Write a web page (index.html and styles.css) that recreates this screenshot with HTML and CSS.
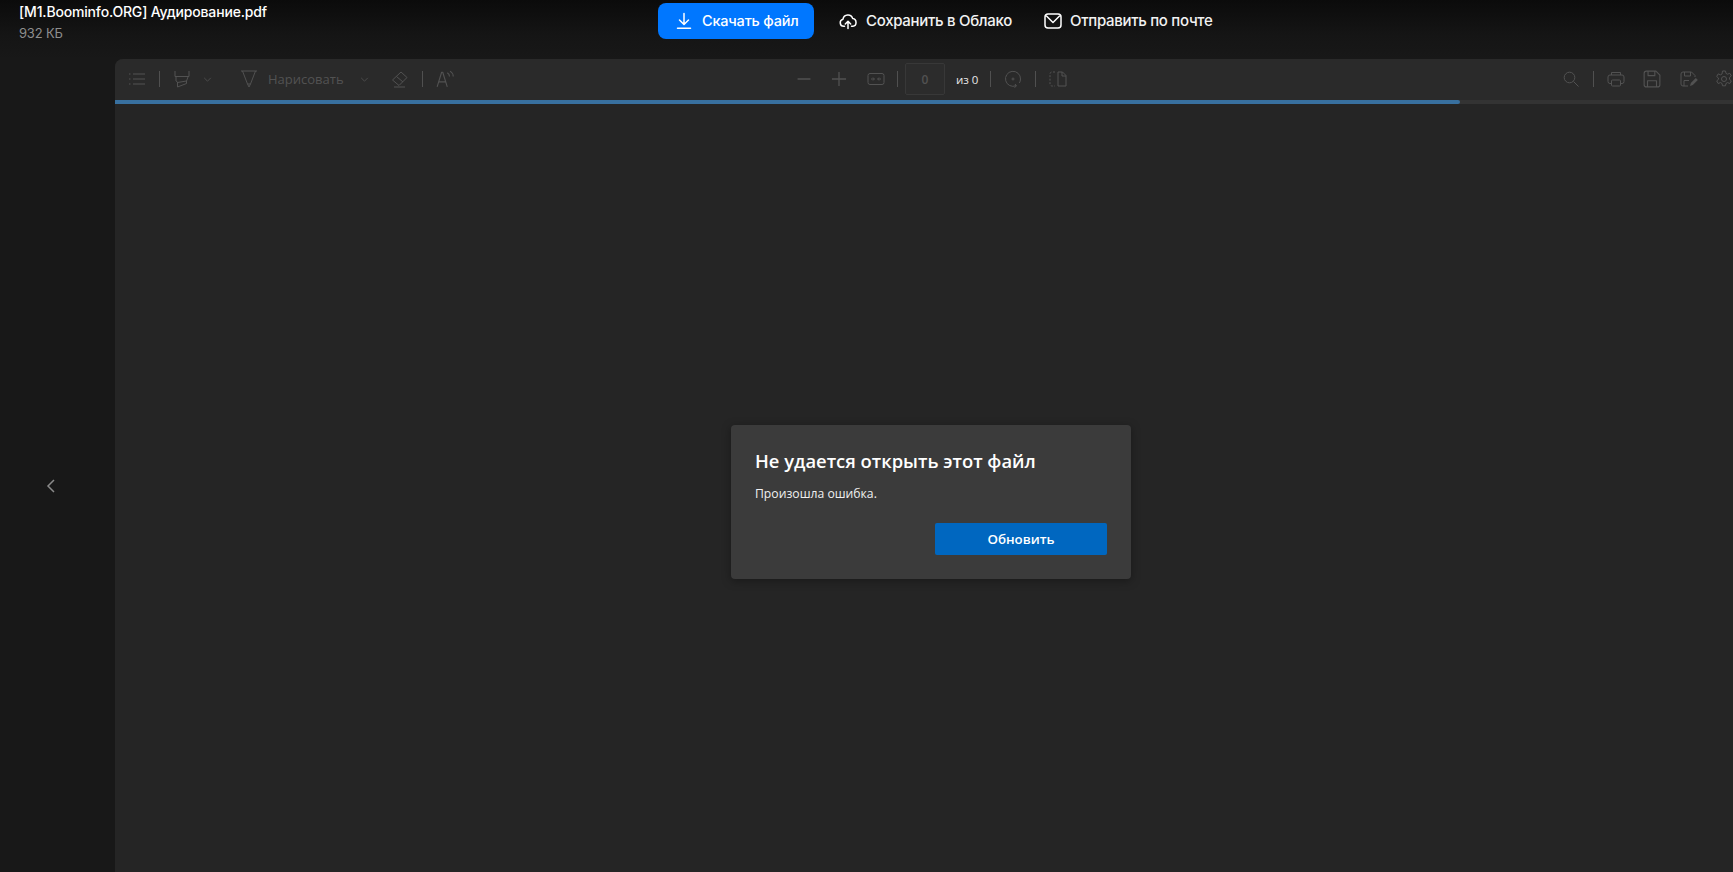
FILE: index.html
```html
<!DOCTYPE html>
<html lang="ru">
<head>
<meta charset="utf-8">
<title>Просмотр файла</title>
<link rel="stylesheet" href="styles.css">
</head>
<body>
<header class="top">
  <div class="file">
    <div class="file-name">[M1.Boominfo.ORG] Аудирование.pdf</div>
    <div class="file-size">932 КБ</div>
  </div>
  <div class="actions">
    <button class="primary">
      <svg class="ai" viewBox="0 0 18 18"><path d="M9 1.500v10.500M4.500 8 9 12.500 13.500 8M2.500 16.200h13"/></svg>
      Скачать файл
    </button>
    <a class="action save">
      <svg class="ai" viewBox="0 0 18 18"><path d="M5.500 14.300H4.800A3.600 3.600 0 0 1 4 7.200a5 5 0 0 1 9.700-.6 3.900 3.900 0 0 1 .1 7.700h-1.300M9 16.500V9.500M6.300 12 9 9.300 11.700 12"/></svg>
      Сохранить в Облако
    </a>
    <a class="action mail">
      <svg class="ai" viewBox="0 0 18 18"><rect x="1" y="2" width="16" height="14" rx="3"/><path d="M2.500 4 9 10.500 15.500 4"/></svg>
      Отправить по почте
    </a>
  </div>
</header>
<main class="main">
  <nav class="gutter">
    <svg class="chev" viewBox="0 0 10 16"><path d="M8 2 2 8l6 6"/></svg>
  </nav>
  <section class="viewer">
    <div class="toolbar">
      <span class="tb"><svg viewBox="0 0 18 14"><path d="M5 2h12M5 7h12M5 12h12M1 2h1.500M1 7h1.500M1 12h1.500"/></svg></span>
      <i class="sep"></i>
      <span class="tb"><svg viewBox="0 0 16 18"><path d="M1 1v5.500h14V1M2 7v4l1.500 1v5l9-3.500V11L14 7M3.500 12.500 12.500 11"/></svg></span>
      <span class="tb-s"><svg viewBox="0 0 10 6"><path d="M1 1l4 4 4-4"/></svg></span>
      <span class="tb draw"><svg viewBox="0 0 18 18"><path d="M1 1h16M2.500 1 7.500 14h3L15.500 1M7.500 14 9 17l1.500-3"/></svg></span>
      <span class="draw-label">Нарисовать</span>
      <span class="tb-s draw-chev"><svg viewBox="0 0 10 6"><path d="M1 1l4 4 4-4"/></svg></span>
      <span class="tb eraser"><svg viewBox="0 0 18 18"><path d="M1.500 10 10 2l6 5.500-8 8zM5.500 6.500 12 12M3 17h11"/></svg></span>
      <i class="sep"></i>
      <span class="tb"><svg viewBox="0 0 16 16"><path d="M1 15 5 2h1l4 13M2.500 10.500h6M10 2.500c1.500.8 2 1.800 2 3.300M12.500 1c2 1.200 2.800 2.800 2.800 4.800"/></svg></span>

      <span class="tb minus"><svg viewBox="0 0 14 14"><path d="M2 7h10"/></svg></span>
      <span class="tb plus"><svg viewBox="0 0 14 14"><path d="M1.500 7h11M7 1.500v11"/></svg></span>
      <span class="tb fit"><svg viewBox="0 0 18 14"><rect x="1" y="1.500" width="16" height="11" rx="2"/><path d="M4 7h3M11 7h3M6 5.500 7.500 7 6 8.500M12 5.500 10.500 7 12 8.500"/></svg></span>
      <i class="sep sep-fit"></i>
      <span class="page-input">0</span>
      <span class="page-total">из 0</span>
      <i class="sep sep-total"></i>
      <span class="tb"><svg viewBox="0 0 18 18"><path d="M12 15.700A7.500 7.500 0 1 1 16.500 9c0 1.500-.4 2.800-1.100 4M11 14l1.500 2-2 1.500"/><circle cx="9" cy="9" r="1"/></svg></span>
      <i class="sep"></i>
      <span class="tb"><svg viewBox="0 0 18 16"><path d="M9 1h4.500L17 4.500V15H9zM13 1v4h4"/><path class="dash" d="M6 1H3a2 2 0 0 0-2 2v10a2 2 0 0 0 2 2h3"/></svg></span>

      <span class="tb search"><svg viewBox="0 0 16 16"><circle cx="6.500" cy="6.500" r="5.300"/><path d="m10.500 10.500 5 5"/></svg></span>
      <i class="sep"></i>
      <span class="tb print"><svg viewBox="0 0 18 16"><path d="M4.500 4V1.500h9V4M4.500 12.500H3A2 2 0 0 1 1 10.500V6a2 2 0 0 1 2-2h12a2 2 0 0 1 2 2v4.500a2 2 0 0 1-2 2h-1.500"/><rect x="4.500" y="9" width="9" height="6" rx="1"/></svg></span>
      <span class="tb disk"><svg viewBox="0 0 16 16"><path d="M1 3a2 2 0 0 1 2-2h8.500L15 4.500V13a2 2 0 0 1-2 2H3a2 2 0 0 1-2-2zM4.500 1v4h6V1M4 15V9.500h8V15"/></svg></span>
      <span class="tb disk-edit"><svg viewBox="0 0 18 16"><path d="M8 15H3a2 2 0 0 1-2-2V3a2 2 0 0 1 2-2h8.500L15 4.500V6M4.500 1v4h6V1M4 15V9.500h5"/><path class="fill" d="m10 15 .8-3 5-5 2 2-5 5z"/></svg></span>
      <span class="tb gear"><svg viewBox="0 0 18 18"><circle cx="9" cy="9" r="2.500"/><path d="M7.500 1h3l.5 2.400 1.500.8 2.300-.9 1.500 2.600-1.800 1.600v1.800l1.800 1.600-1.500 2.600-2.300-.9-1.500.8-.5 2.400h-3L7 13.400l-1.500-.8-2.300.9-1.500-2.600 1.800-1.600V8.100L1.700 6.500l1.500-2.600 2.300.9L7 4z"/></svg></span>
    </div>
    <div class="progress"><div class="progress-bar"></div></div>
    <div class="canvas">
      <div class="dialog">
        <h2 class="dialog-title">Не удается открыть этот файл</h2>
        <p class="dialog-text">Произошла ошибка.</p>
        <div class="dialog-actions"><button class="refresh">Обновить</button></div>
      </div>
    </div>
  </section>
</main>
</body>
</html>
```
FILE: styles.css
```css
* { box-sizing: border-box; }
html, body { height: 100%; margin: 0; }
body {
  display: flex;
  flex-direction: column;
  overflow: hidden;
  background: #181818;
  font-family: Inter, "Noto Sans", sans-serif;
  color: #fff;
}
.top {
  position: relative;
  height: 59px;
  flex: none;
  display: flex;
  background: linear-gradient(#0b0b0b, #151515 60%, #181818);
}
.file { padding: 3px 0 0 19px; width: 658px; flex: none; }
.file-name { font-size: 14px; line-height: 18px; font-weight: 500; letter-spacing: -0.17px; white-space: nowrap; }
.file-size { margin-top: 3px; font-size: 13px; line-height: 18px; color: #8e8e8e; letter-spacing: -0.2px; }
.actions { display: flex; align-items: flex-start; }
.primary {
  display: flex;
  align-items: center;
  gap: 9px;
  width: 156px;
  height: 36px;
  margin-top: 3px;
  padding: 0 0 1px 17px;
  border: 0;
  border-radius: 8px;
  background: #0077ff;
  color: #fff;
  font: 500 14.500px Inter, sans-serif;
  letter-spacing: -0.2px;
  white-space: nowrap;
}
.action {
  display: flex;
  align-items: center;
  gap: 9px;
  height: 36px;
  margin-top: 3px;
  padding-bottom: 1px;
  font-size: 15px;
  font-weight: 500;
  letter-spacing: -0.3px;
  color: #f2f2f2;
  white-space: nowrap;
}
.save { margin-left: 25px; }
.mail { margin-left: 32px; gap: 8px; }
.ai { width: 18px; height: 18px; flex: none; fill: none; stroke: #fff; stroke-width: 1.500; stroke-linecap: round; stroke-linejoin: round; }
.main { flex: 1; min-height: 0; display: flex; }
.gutter { width: 115px; flex: none; display: flex; align-items: center; justify-content: center; padding: 40px 14px 0 0; }
.chev { width: 10px; height: 16px; fill: none; stroke: #8a8a8a; stroke-width: 1.500; }
.viewer {
  width: 1632px;
  flex: none;
  display: flex;
  flex-direction: column;
  background: #252525;
  border-radius: 8px 0 0 0;
  overflow: hidden;
}
.toolbar {
  height: 41px;
  flex: none;
  display: flex;
  align-items: center;
  padding: 0 6px 1px 5px;
  background: #2a2a2a;
  color: #525252;
}
.tb { width: 34px; height: 40px; flex: none; display: flex; align-items: center; justify-content: center; }
.tb svg { width: 18px; height: 18px; fill: none; stroke: #525252; stroke-width: 1; stroke-linejoin: round; }
.tb-s { width: 16px; flex: none; display: flex; justify-content: center; }
.tb-s svg { width: 9px; height: 5px; fill: none; stroke: #525252; stroke-width: 1; }
.sep { width: 1px; height: 16px; margin: 0 5px; flex: none; background: #505050; }
.draw { margin-left: 17px; }
.draw-label { width: 75px; margin-left: 2px; flex: none; font: 500 13px "Open Sans", sans-serif; color: #525252; white-space: nowrap; }
.draw-chev { margin-left: 13px; }
.eraser { margin-left: 11px; }
.minus { margin-left: 325px; }
.plus { margin-left: 1px; }
.fit { margin-left: 3px; }
.sep-fit { margin: 0 7px 0 4px; }
.page-input {
  width: 40px; height: 32px; flex: none;
  display: flex; align-items: center; justify-content: center;
  border: 1px solid #383838;
  border-radius: 2px;
  background: #2c2c2c;
  font: 600 12px "Open Sans", sans-serif;
  color: #525252;
}
.page-total { width: 22px; margin-left: 11px; flex: none; font: 11.500px "Open Sans", sans-serif; color: #e8e8e8; white-space: nowrap; }
.sep-total { margin: 0 5px 0 12px; }
.search { margin-left: auto; }
.search svg { width: 16px; height: 16px; }
.print { margin-left: 0; }
.disk { margin-left: 2px; }
.disk-edit { margin-left: 3px; }
.gear { margin-left: 1px; }
.dash { stroke-dasharray: 2 1.500; }
.fill { fill: #525252; stroke: none; }
.progress { height: 4px; flex: none; background: #333; }
.progress-bar { width: 1345px; height: 100%; background: #38709f; border-radius: 0 2px 2px 0; }
.canvas { flex: 1; min-height: 0; display: flex; align-items: center; justify-content: center; padding-top: 28px; }
.dialog {
  width: 400px;
  height: 154px;
  padding: 24px;
  background: #3b3b3b;
  border-radius: 4px;
  box-shadow: 0 2px 10px rgba(0, 0, 0, .35);
}
.dialog-title { margin: 0; font: 600 18.400px/24px "Open Sans", sans-serif; color: #fff; white-space: nowrap; }
.dialog-text { margin: 13px 0 0; font: 12.200px/16px "Open Sans", sans-serif; color: #f0f0f0; }
.dialog-actions { display: flex; justify-content: flex-end; margin-top: 21px; }
.refresh {
  width: 172px; height: 32px;
  border: 0; border-radius: 2px;
  background: #0067c0;
  color: #fff;
  font: 600 13.300px "Open Sans", sans-serif;
}
```
